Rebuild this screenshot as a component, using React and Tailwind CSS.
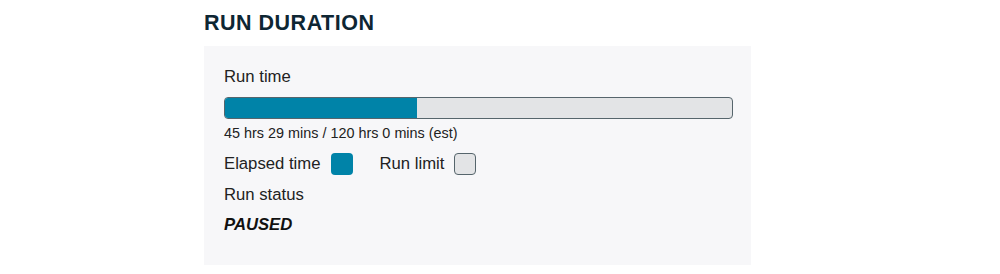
export default function App() {
  return (
    <div className="w-[1000px] h-[274px] bg-white overflow-hidden" style={{ fontFamily: '"Liberation Sans", Arial, sans-serif' }}>
      <div className="ml-[204px] w-[547px] pt-[9px]">
        <h2 className="text-[21.5px] leading-[28px] tracking-[0.5px] font-bold text-[#0e2633] mb-[9px]">RUN DURATION</h2>
        <div className="bg-[#f7f7f9] pl-[20px] pr-[18px] pt-[19px] pb-[28px] text-[#222]">
          <div className="text-[16.7px] leading-[24px]">Run time</div>
          <div className="mt-[8px] h-[22px] w-[509px] rounded-[4px] border border-[#56656c] bg-[#e3e4e6] overflow-hidden">
            <div className="h-full bg-[#0083a8]" style={{ width: `${(45 + 29 / 60) / 120 * 100}%` }} />
          </div>
          <div className="mt-[4px] text-[14.4px] leading-[20px]">45 hrs 29 mins / 120 hrs 0 mins (est)</div>
          <div className="mt-[10px] flex items-center h-[22px] text-[16.7px]">
            <span>Elapsed time</span>
            <span className="ml-[11px] w-[22px] h-[22px] rounded-[4px] bg-[#0083a8]" />
            <span className="ml-[26px]">Run limit</span>
            <span className="ml-[10px] w-[22px] h-[22px] rounded-[4px] border border-[#56656c] bg-[#e3e4e6]" />
          </div>
          <div className="mt-[8px] text-[16.7px] leading-[24px]">Run status</div>
          <div className="mt-[6px] text-[16.7px] leading-[24px] font-bold italic text-[#111]">PAUSED</div>
        </div>
      </div>
    </div>
  );
}
